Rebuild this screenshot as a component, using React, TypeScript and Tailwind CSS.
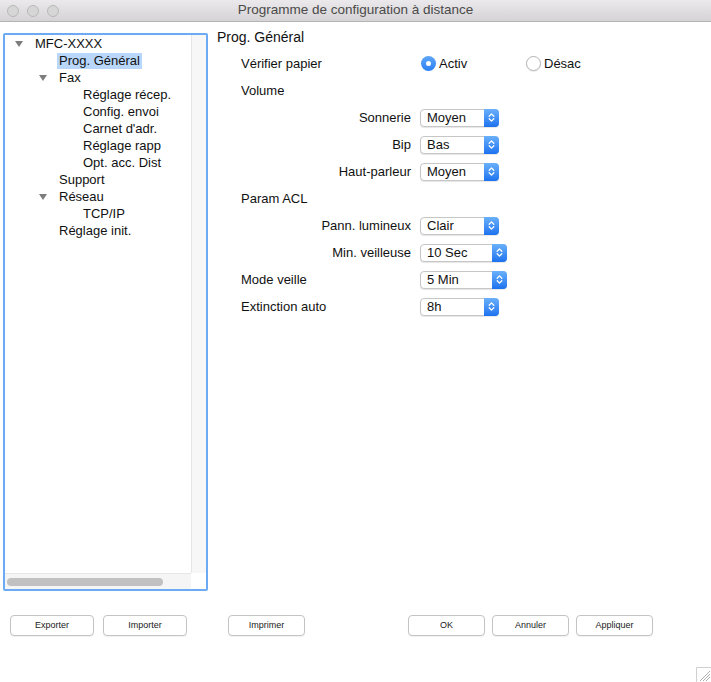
import type { ReactNode } from 'react'

type TreeRow = { label: string; level: 0 | 1 | 2; open?: boolean; selected?: boolean }

const tree: TreeRow[] = [
  { label: 'MFC-XXXX', level: 0, open: true },
  { label: 'Prog. Général', level: 1, selected: true },
  { label: 'Fax', level: 1, open: true },
  { label: 'Réglage récep.', level: 2 },
  { label: 'Config. envoi', level: 2 },
  { label: "Carnet d'adr.", level: 2 },
  { label: 'Réglage rapp', level: 2 },
  { label: 'Opt. acc. Dist', level: 2 },
  { label: 'Support', level: 1 },
  { label: 'Réseau', level: 1, open: true },
  { label: 'TCP/IP', level: 2 },
  { label: 'Réglage init.', level: 1 },
]

const textPad = ['pl-[30px]', 'pl-[54px]', 'pl-[78px]']
const arrowPad = ['left-[10px]', 'left-[34px]', 'left-[58px]']

function Disclosure() {
  return (
    <svg width="8" height="6" viewBox="0 0 8 6" className="block">
      <path d="M0 0 H8 L4 6 Z" fill="#7d7d7d" />
    </svg>
  )
}

function PopUp({ value, wide }: { value: string; wide?: boolean }) {
  return (
    <div
      className={`flex h-[18px] items-stretch rounded-[4px] border border-[#c6c6c6] bg-white shadow-[0_1px_1px_rgba(0,0,0,0.1)] ${
        wide ? 'w-[87px]' : 'w-[79px]'
      }`}
    >
      <span className="flex-1 pl-[6px] text-[13px] leading-[16px] text-[#111]">{value}</span>
      <span className="-my-px -mr-px flex w-[15px] items-center justify-center rounded-r-[4px] bg-linear-to-b from-[#6ab1fb] to-[#1b71ee]">
        <svg width="7" height="11" viewBox="0 0 7 11">
          <path
            d="M1.2 4.2 L3.5 1.9 L5.8 4.2 M1.2 6.8 L3.5 9.1 L5.8 6.8"
            fill="none"
            stroke="#fff"
            strokeWidth="1.3"
            strokeLinecap="round"
            strokeLinejoin="round"
          />
        </svg>
      </span>
    </div>
  )
}

function Radio({ checked, label }: { checked?: boolean; label: string }) {
  return (
    <div className="flex items-center gap-[3px]">
      {checked ? (
        <span className="flex h-[15px] w-[15px] items-center justify-center rounded-full bg-linear-to-b from-[#5ea6f8] to-[#2c80f3]">
          <span className="h-[5px] w-[5px] rounded-full bg-white" />
        </span>
      ) : (
        <span className="h-[15px] w-[15px] rounded-full border border-[#b4b4b4] bg-white shadow-[0_1px_1px_rgba(0,0,0,0.08)]" />
      )}
      <span className="text-[13px] text-[#111]">{label}</span>
    </div>
  )
}

function Row({ label, right, children }: { label?: string; right?: boolean; children?: ReactNode }) {
  return (
    <div className="grid h-[27px] grid-cols-[170px_1fr] items-center gap-x-[9px]">
      <span className={`text-[13px] text-[#111] ${right ? 'text-right' : ''}`}>{label}</span>
      <div className="flex items-center">{children}</div>
    </div>
  )
}

function PushButton({ label, className }: { label: string; className: string }) {
  return (
    <button
      type="button"
      className={`h-[21px] shrink-0 rounded-[4px] border border-[#c4c4c4] bg-white text-[9px] leading-[19px] text-[#1a1a1a] shadow-[0_1px_1px_rgba(0,0,0,0.06)] ${className}`}
    >
      {label}
    </button>
  )
}

export default function App() {
  return (
    <div className="flex h-[682px] w-[711px] flex-col overflow-hidden bg-white font-['Liberation_Sans',Arial,sans-serif]">
      {/* title bar */}
      <div className="relative flex h-[22px] shrink-0 items-center justify-center border-b border-[#b4b4b4] bg-linear-to-b from-[#ebe9eb] to-[#d5d3d5]">
        <div className="absolute left-[7px] top-[5px] flex gap-[8px]">
          {[0, 1, 2].map((i) => (
            <span key={i} className="h-[12px] w-[12px] rounded-full border border-[#b9b9b9] bg-[#d6d6d6]" />
          ))}
        </div>
        <span className="text-[13.5px] text-[#4a4a4a]">Programme de configuration à distance</span>
      </div>

      <div className="flex">
        {/* tree */}
        <div className="ml-[3px] mt-[11px] flex h-[558px] w-[205px] shrink-0 flex-col rounded-[2px] border-2 border-[#6cabf4] bg-white">
          <div className="flex min-h-0 flex-1">
            <div className="flex-1">
              {tree.map((r) => (
                <div key={r.label} className="relative h-[17px]">
                  {r.open && (
                    <span className={`absolute top-[6px] ${arrowPad[r.level]}`}>
                      <Disclosure />
                    </span>
                  )}
                  <div className={`${textPad[r.level]} flex h-[17px] items-center`}>
                    <span
                      className={`-ml-[2px] px-[2px] text-[13px] leading-[16px] text-[#111] ${
                        r.selected ? 'bg-[#b9d7fb]' : ''
                      }`}
                    >
                      {r.label}
                    </span>
                  </div>
                </div>
              ))}
            </div>
            <div className="w-[15px] border-l border-[#e6e6e6] bg-[#f7f7f7]" />
          </div>
          <div className="flex h-[16px]">
            <div className="flex flex-1 items-center border-t border-[#e6e6e6] bg-[#f5f5f5]">
              <span className="ml-[2px] h-[8px] w-[156px] rounded-full bg-[#c1c1c1]" />
            </div>
            <div className="w-[15px] bg-white" />
          </div>
        </div>

        {/* settings */}
        <div className="ml-[9px] mt-[7px] flex-1">
          <h1 className="text-[14px] leading-[17px] text-[#111]">Prog. Général</h1>
          <div className="mt-[4px] pl-[24px]">
            <Row label="Vérifier papier">
              <div className="ml-px flex">
                <div className="w-[105px]">
                  <Radio checked label="Activ" />
                </div>
                <Radio label="Désac" />
              </div>
            </Row>
            <Row label="Volume" />
            <Row label="Sonnerie" right>
              <PopUp value="Moyen" />
            </Row>
            <Row label="Bip" right>
              <PopUp value="Bas" />
            </Row>
            <Row label="Haut-parleur" right>
              <PopUp value="Moyen" />
            </Row>
            <Row label="Param ACL" />
            <Row label="Pann. lumineux" right>
              <PopUp value="Clair" />
            </Row>
            <Row label="Min. veilleuse" right>
              <PopUp value="10 Sec" wide />
            </Row>
            <Row label="Mode veille">
              <PopUp value="5 Min" wide />
            </Row>
            <Row label="Extinction auto">
              <PopUp value="8h" />
            </Row>
          </div>
        </div>
      </div>

      {/* buttons */}
      <div className="mt-[24px] flex items-start pl-[10px]">
        <PushButton label="Exporter" className="w-[84px]" />
        <PushButton label="Importer" className="ml-[9px] w-[84px]" />
        <PushButton label="Imprimer" className="ml-[41px] w-[77px]" />
        <PushButton label="OK" className="ml-[103px] w-[77px]" />
        <PushButton label="Annuler" className="ml-[7px] w-[77px]" />
        <PushButton label="Appliquer" className="ml-[7px] w-[77px]" />
      </div>

      <div className="flex flex-1 items-end justify-end">
        <svg width="15" height="15" viewBox="0 0 15 15" className="block">
          <path d="M0.5 15 V0.5 H15" fill="none" stroke="#d0d0d0" />
          <path d="M4 14 L14 4 M7 14 L14 7 M10 14 L14 10" stroke="#9a9a9a" strokeWidth="0.8" />
        </svg>
      </div>
    </div>
  )
}
